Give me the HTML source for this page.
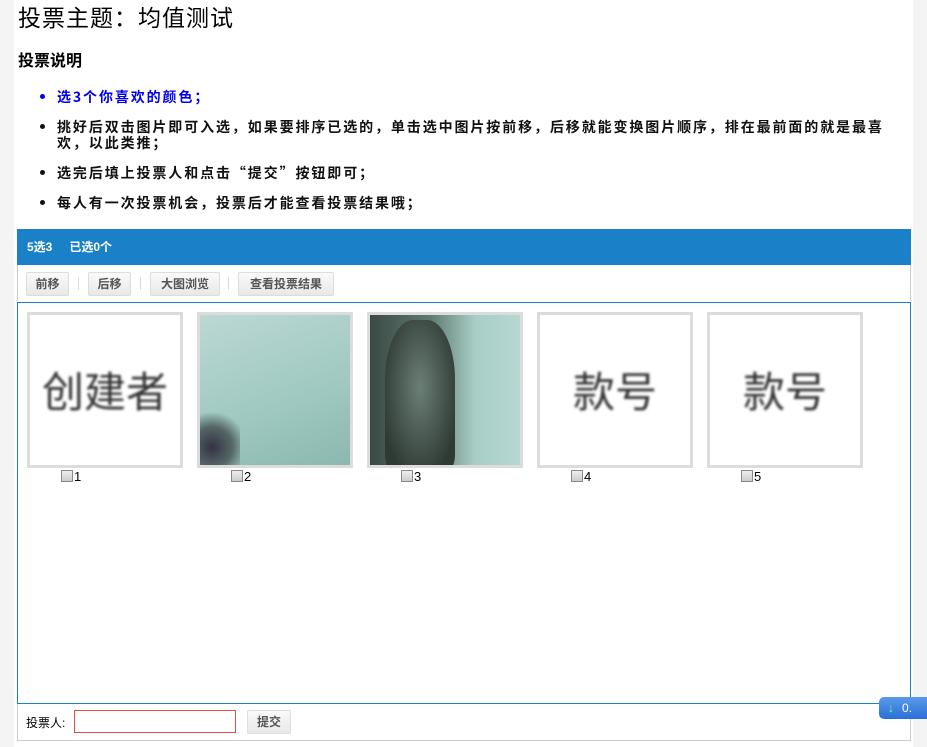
<!DOCTYPE html>
<html><head><meta charset="utf-8"><style>
body{margin:0;background:#f4f4f4;font-family:"Liberation Sans","Noto Sans CJK SC",sans-serif;width:927px;height:747px;overflow:hidden;position:relative}
.page{position:absolute;left:14px;top:0;width:899px;height:747px;background:#fff}
h1{position:absolute;left:4px;top:0px;margin:0;font-size:23px;line-height:32px;font-weight:normal;color:#000;letter-spacing:1px;font-family:"Noto Sans CJK SC",sans-serif}
h2{position:absolute;left:4px;top:47px;margin:0;font-size:16px;line-height:24px;font-weight:bold;font-family:"Noto Sans CJK SC",sans-serif}
ul{position:absolute;left:25px;top:89px;margin:0;padding:0 0 0 18px;width:870px;font-size:14px;font-weight:bold;line-height:16px;font-family:"Noto Sans CJK SC",sans-serif;color:#111;letter-spacing:1.9px}
li{margin-bottom:14px}
.blue{color:#0000ee}
.bar{position:absolute;left:3px;top:229px;width:894px;height:36px;background:#1a80c8;color:#fff;font-size:12px;font-weight:bold;line-height:36px}
.tb{position:absolute;left:3px;top:265px;width:892px;height:36px;border:1px solid #ccc;border-top:none;border-bottom:none}
.btn{position:absolute;top:7px;height:22px;border:1px solid #ddd;border-radius:2px;background:linear-gradient(#fafafa,#e8e8e8);font-size:12px;font-weight:bold;color:#555;line-height:22px;text-align:center}
.sep{position:absolute;top:12px;width:1px;height:13px;background:#ddd}
.area{position:absolute;left:3px;top:302px;width:892px;height:400px;border:1px solid #1a80c8}
.img{position:absolute;top:9px;width:150px;height:150px;border:3px solid #dcdcdc;overflow:hidden}
.txt{position:absolute;left:0;right:0;top:44px;text-align:center;font-size:42px;color:#333;filter:blur(1.3px);font-family:"Noto Sans CJK SC",sans-serif}
.cb{position:absolute;top:167px;width:10px;height:10px;border:1px solid #888;background:linear-gradient(#eee,#ccc)}
.num{position:absolute;top:166px;font-size:13px}
.foot{position:absolute;left:3px;top:704px;width:892px;height:36px;border:1px solid #ccc;border-top:none;font-size:12px}
.in{position:absolute;left:56px;top:6px;width:160px;height:21px;border:1px solid #e05040}
</style></head><body>
<div class="page">
<h1>投票主题：均值测试</h1>
<h2>投票说明</h2>
<ul>
<li class="blue">选3个你喜欢的颜色；</li>
<li>挑好后双击图片即可入选，如果要排序已选的，单击选中图片按前移，后移就能变换图片顺序，排在最前面的就是最喜<br>欢，以此类推；</li>
<li>选完后填上投票人和点击“提交”按钮即可；</li>
<li>每人有一次投票机会，投票后才能查看投票结果哦；</li>
</ul>
<div class="bar"><span style="margin-left:10px">5选3</span><span style="margin-left:17px">已选0个</span></div>
<div class="tb">
<div class="btn" style="left:8px;width:41px">前移</div><div class="sep" style="left:60px"></div>
<div class="btn" style="left:70px;width:41px">后移</div><div class="sep" style="left:122px"></div>
<div class="btn" style="left:132px;width:68px">大图浏览</div><div class="sep" style="left:210px"></div>
<div class="btn" style="left:220px;width:94px">查看投票结果</div>
</div>
<div class="area">
<div class="img" style="left:9px"><div class="txt">创建者</div></div>
<div class="img" style="left:179px;background:linear-gradient(160deg,#bcd8d4,#9ec8c0 60%,#8bb8b0)"><div style="position:absolute;left:0;bottom:0;width:40px;height:60px;background:radial-gradient(circle at 30% 70%,#334 0,#566 40%,transparent 70%)"></div></div>
<div class="img" style="left:349px;background:linear-gradient(90deg,#3a4a44,#5f7a70 40%,#a8cec6 70%,#b6d8d2)"><div style="position:absolute;left:15px;top:5px;width:70px;height:150px;border-radius:40% 40% 10% 10%;background:radial-gradient(ellipse at 50% 45%,#6b7f76,#2f3a35 80%)"></div></div>
<div class="img" style="left:519px"><div class="txt">款号</div></div>
<div class="img" style="left:689px"><div class="txt">款号</div></div>
<div class="cb" style="left:43px"></div><div class="num" style="left:56px">1</div>
<div class="cb" style="left:213px"></div><div class="num" style="left:226px">2</div>
<div class="cb" style="left:383px"></div><div class="num" style="left:396px">3</div>
<div class="cb" style="left:553px"></div><div class="num" style="left:566px">4</div>
<div class="cb" style="left:723px"></div><div class="num" style="left:736px">5</div>
</div>
<div class="foot"><span style="position:absolute;left:8px;top:10px">投票人:</span><div class="in"></div>
<div class="btn" style="left:229px;top:6px;width:42px">提交</div></div>
</div>
<div style="position:absolute;left:879px;top:697px;width:60px;height:22px;border-radius:5px;background:linear-gradient(#5a9ae8,#2a70d8);color:#fff;font-size:12px;line-height:22px"><span style="color:#8f8;margin-left:9px;font-weight:bold">↓</span><span style="margin-left:8px">0.</span></div>
</body></html>
